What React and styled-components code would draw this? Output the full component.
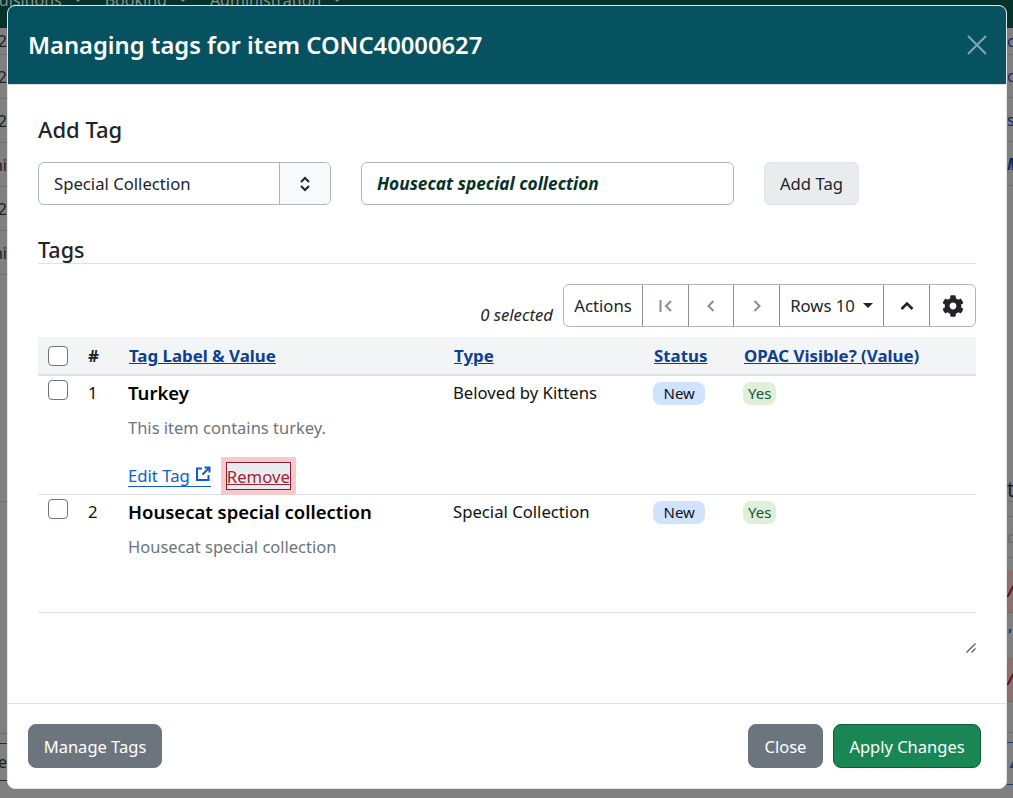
import React from 'react';
import styled, { createGlobalStyle } from 'styled-components';
import { FaCog } from 'react-icons/fa';

const GlobalStyle = createGlobalStyle`
  html, body { margin: 0; padding: 0; height: 100%; overflow: hidden; }
  body { font-family: "Noto Sans", "Open Sans", Arial, sans-serif; background: #808080; }
`;

const Page = styled.div`
  width: 1013px;
  height: 798px;
  position: relative;
  overflow: hidden;
  background: #808080;
`;

// page behind the modal, only the edges and the top of it show
const TopBar = styled.div`
  height: 28px;
  background: #07322a;
  color: #84938e;
  font-size: 16px;
  line-height: 0;
  display: flex;
  gap: 23px;
  overflow: hidden;
`;

const NavItem = styled.span`
  display: flex;
  align-items: center;
  gap: 12px;
  height: 0;
  margin-left: ${(p) => p.$ml || 0}px;
  white-space: nowrap;
`;

const NavCaret = styled.span`
  border-top: 4px solid #84938e;
  border-left: 4px solid transparent;
  border-right: 4px solid transparent;
`;

const Behind = styled.div`
  display: flex;
  justify-content: space-between;
`;

const Edge = styled.div`
  width: ${(p) => p.$w}px;
  overflow: hidden;
  display: flex;
  flex-direction: column;
`;

const EdgeRow = styled.div`
  height: ${(p) => p.$h}px;
  box-sizing: border-box;
  flex: none;
  display: flex;
  align-items: center;
  justify-content: ${(p) => (p.$end ? 'flex-end' : 'flex-start')};
  background: ${(p) => p.$bg || 'transparent'};
  border-bottom: 1px solid ${(p) => p.$line || '#6f6f6f'};
  color: ${(p) => p.$color || '#1c1f22'};
  font-size: ${(p) => p.$size || 16}px;
  font-style: ${(p) => (p.$italic ? 'italic' : 'normal')};
  font-weight: ${(p) => (p.$italic ? 700 : 400)};
  white-space: nowrap;
`;

const Modal = styled.div`
  position: absolute;
  left: 7px;
  top: 5px;
  width: 1000px;
  height: 784px;
  box-sizing: border-box;
  background: #fff;
  border: 1px solid #e4e4e4;
  border-radius: 8px;
  display: flex;
  flex-direction: column;
  overflow: hidden;
`;

const Header = styled.div`
  height: 79px;
  box-sizing: border-box;
  flex: none;
  background: #065260;
  border-bottom: 1px solid #dee2e6;
  display: flex;
  align-items: center;
  justify-content: space-between;
  padding: 0 19px 0 20px;
`;

const Title = styled.h1`
  margin: 0;
  font-size: 23.75px;
  font-weight: 600;
  color: #fff;
`;

const Body = styled.div`
  flex: 1;
  padding: 28px 30px 0;
  display: flex;
  flex-direction: column;
  color: #212529;
  font-size: 16.7px;
`;

const SectionTitle = styled.h2`
  margin: 0;
  font-size: 22px;
  font-weight: 500;
  line-height: 32px;
`;

const AddRow = styled.div`
  display: flex;
  margin-top: 17px;
  height: 43px;
`;

const Select = styled.div`
  width: 293px;
  box-sizing: border-box;
  display: flex;
  border: 1px solid #adb5bd;
  border-radius: 6px;
  margin-right: 30px;
  overflow: hidden;
`;

const SelectValue = styled.div`
  flex: 1;
  padding-left: 15px;
  display: flex;
  align-items: center;
`;

const SelectArrows = styled.div`
  width: 50px;
  background: #f8f9fa;
  border-left: 1px solid #adb5bd;
  display: flex;
  align-items: center;
  justify-content: center;
`;

const TagInput = styled.div`
  width: 373px;
  box-sizing: border-box;
  margin-right: 30px;
  border: 1px solid #adb5bd;
  border-radius: 6px;
  padding-left: 15px;
  display: flex;
  align-items: center;
  font-size: 17.3px;
  font-weight: 700;
  font-style: italic;
  color: #07322a;
`;

const GreyButton = styled.button`
  font: inherit;
  color: #212529;
  width: 95px;
  padding: 0;
  background: #e9ecef;
  border: 1px solid #dee2e6;
  border-radius: 6px;
`;

const TagsHeading = styled(SectionTitle)`
  margin-top: 31px;
  font-size: 21.5px;
  line-height: 27px;
  border-bottom: 1px solid #dee2e6;
`;

const Toolbar = styled.div`
  margin-top: 20px;
  display: flex;
  justify-content: flex-end;
  align-items: flex-end;
  gap: 10px;
`;

const Selected = styled.em`
  line-height: 24px;
`;

const ToolGroup = styled.div`
  display: flex;
  height: 43px;
  border: 1px solid #adb5bd;
  border-radius: 6px;
  box-sizing: border-box;
`;

const ToolButton = styled.div`
  width: ${(p) => p.$w}px;
  box-sizing: border-box;
  display: flex;
  align-items: center;
  justify-content: center;
  gap: 8px;
  color: #212529;
  & + & { border-left: 1px solid #8a8f94; }
`;

const Caret = styled.span`
  border-top: 5px solid #212529;
  border-left: 5px solid transparent;
  border-right: 5px solid transparent;
`;

const Table = styled.table`
  margin-top: 10px;
  width: 100%;
  border-collapse: collapse;
  table-layout: fixed;
`;

const Col = styled.col`
  width: ${(p) => (p.$w ? `${p.$w}px` : 'auto')};
`;

const HeadCell = styled.th`
  height: 37px;
  padding: 0;
  text-align: left;
  font-size: 16.85px;
  background: #f3f4f6;
  border-bottom: 2px solid #dee2e6;
  font-weight: 700;
  color: ${(p) => (p.$plain ? '#212529' : '#0b3f93')};
  text-decoration: ${(p) => (p.$plain ? 'none' : 'underline')};
`;

const Row = styled.tr`
  height: ${(p) => p.$h}px;
`;

const Cell = styled.td`
  padding: 5px 0 0;
  vertical-align: top;
  border-bottom: 1px solid #dee2e6;
  line-height: 24px;
  color: #111;
`;

const CheckCell = styled(Cell)`
  padding: 4px 0 0 10px;
`;

const Check = styled.span`
  display: block;
  box-sizing: border-box;
  width: 20px;
  height: 20px;
  border: 1px solid #6c757d;
  border-radius: 4px;
  background: #fff;
`;

const HeadCheck = styled(Check)`
  margin-left: 10px;
`;

const Label = styled.div`
  margin-left: -1px;
  font-size: 18.5px;
  font-weight: 600;
  color: #000;
`;

const Description = styled.div`
  margin: 11px 0 0 -1px;
  font-size: 16.5px;
  color: #6c757d;
`;

const TypeText = styled.div`
  margin-left: -1px;
`;

const Links = styled.div`
  display: flex;
  align-items: center;
  margin-top: 22px;
  height: 28px;
  gap: 15px;
  line-height: 20px;
`;

const EditLink = styled.span`
  color: #0b5ed7;
  border-bottom: 1px solid #0b5ed7;
  display: inline-flex;
  align-items: flex-start;
  gap: 5px;
  margin-left: -1px;
  margin-top: 1px;
`;

const RemoveLink = styled.span`
  box-sizing: border-box;
  height: 28px;
  line-height: 27px;
  width: 65px;
  text-align: center;
  color: #a02334;
  text-decoration: underline;
  background: #e9ecef;
  border: 1px solid #8c1c2c;
  box-shadow: 0 0 0 5px #f5c9cd;
`;

const Pill = styled.span`
  display: inline-block;
  margin: 1px 0 0 -1px;
  font-size: 15px;
  line-height: 23px;
  padding: 0 ${(p) => p.$pad}px;
  border-radius: 8px;
  color: ${(p) => p.$color};
  background: ${(p) => p.$bg};
`;

const ResizeArea = styled.div`
  flex: none;
  padding-top: 30px;
  display: flex;
  justify-content: flex-end;
`;

const Footer = styled.div`
  height: 85px;
  flex: none;
  border-top: 1px solid #dee2e6;
  padding: 20px 25px 0 20px;
  box-sizing: border-box;
  display: flex;
  gap: 10px;
`;

const FooterButton = styled.button`
  font: inherit;
  font-size: 16.5px;
  width: ${(p) => p.$w}px;
  height: 44px;
  padding: 0;
  color: #fff;
  background: ${(p) => p.$bg};
  border: 1px solid ${(p) => p.$border || p.$bg};
  border-radius: 8px;
  ${(p) => p.$push && 'margin-right: auto;'}
`;

const leftEdge = [
  { h: 27, t: '2' },
  { h: 44, t: '2' },
  { h: 44, t: '2' },
  { h: 44, t: 'ni' },
  { h: 44, t: '2' },
  { h: 44, t: 'ni' },
  { h: 227 },
  { h: 232, line: '#6a6a6a' },
  { h: 10, line: '#2a2d30' },
  { h: 37, t: 'e', line: '#2a2d30' },
];

const rightEdge = [
  { h: 27, t: 'o', color: '#0b2a66' },
  { h: 43, t: 'c', color: '#0b2a66' },
  { h: 44, t: 'st', color: '#0b2a66' },
  { h: 44, t: 'M', color: '#0b2a66', italic: true },
  { h: 291, line: 'transparent' },
  { h: 25, t: 't', size: 21 },
  { h: 15 },
  { h: 41, t: 'ca', color: '#6a6a6a' },
  { h: 12, line: 'transparent' },
  { h: 43, t: '/', color: '#5a0f1a', bg: '#8c7070', italic: true, line: '#7a6565' },
  { h: 44, t: "'", color: '#0b3f80', italic: true, line: 'transparent' },
  { h: 45, t: '/', color: '#5a0f1a', bg: '#8c7070', italic: true, line: '#7a6565' },
  { h: 31 },
  { h: 10, line: '#1f3f6e' },
  { h: 42, t: '▲', color: '#1f3f6e', size: 12, line: '#1f3f6e' },
];

const rows = [
  { n: 1, label: 'Turkey', text: 'This item contains turkey.', type: 'Beloved by Kittens', links: true, h: 119 },
  { n: 2, label: 'Housecat special collection', text: 'Housecat special collection', type: 'Special Collection', h: 118 },
];

const Arrow = ({ d, color = '#868e96', weight = 2 }) => (
  <svg width="16" height="16" viewBox="0 0 16 16" fill="none" stroke={color} strokeWidth={weight}>
    <path d={d} />
  </svg>
);

export default function App() {
  return (
    <Page>
      <GlobalStyle />
      <TopBar>
        <NavItem $ml={-29}>Acquisitions <NavCaret /></NavItem>
        <NavItem>Booking <NavCaret /></NavItem>
        <NavItem>Administration <NavCaret /></NavItem>
      </TopBar>
      <Behind>
        <Edge $w={7}>
          {leftEdge.map((r, i) => (
            <EdgeRow key={i} $h={r.h} $line={r.line} $end>{r.t}</EdgeRow>
          ))}
        </Edge>
        <Edge $w={6}>
          {rightEdge.map((r, i) => (
            <EdgeRow key={i} $h={r.h} $line={r.line} $color={r.color} $bg={r.bg} $size={r.size} $italic={r.italic}>
              {r.t}
            </EdgeRow>
          ))}
        </Edge>
      </Behind>
      <Modal>
        <Header>
          <Title>Managing tags for item CONC40000627</Title>
          <svg width="20" height="20" viewBox="0 0 20 20" stroke="#7fa8af" strokeWidth="2">
            <path d="M1 1l18 18M19 1L1 19" />
          </svg>
        </Header>
        <Body>
          <SectionTitle>Add Tag</SectionTitle>
          <AddRow>
            <Select>
              <SelectValue>Special Collection</SelectValue>
              <SelectArrows>
                <svg width="12" height="18" viewBox="0 0 12 18" fill="none" stroke="#212529" strokeWidth="2">
                  <path d="M2 7l4-4 4 4M2 11l4 4 4-4" />
                </svg>
              </SelectArrows>
            </Select>
            <TagInput>Housecat special collection</TagInput>
            <GreyButton>Add Tag</GreyButton>
          </AddRow>
          <TagsHeading>Tags</TagsHeading>
          <Toolbar>
            <Selected>0 selected</Selected>
            <ToolGroup>
              <ToolButton $w={78}>Actions</ToolButton>
              <ToolButton $w={46}><Arrow d="M2.5 2v12M13 3L8 8l5 5" /></ToolButton>
              <ToolButton $w={45}><Arrow d="M10.5 3L5.5 8l5 5" /></ToolButton>
              <ToolButton $w={46}><Arrow d="M5.5 3l5 5-5 5" /></ToolButton>
              <ToolButton $w={104}>Rows 10 <Caret /></ToolButton>
              <ToolButton $w={46}><Arrow d="M2.5 11l5.5-5.5 5.5 5.5" color="#212529" weight={2.6} /></ToolButton>
              <ToolButton $w={46}><FaCog size={22} color="#212529" /></ToolButton>
            </ToolGroup>
          </Toolbar>
          <Table>
            <colgroup>
              <Col $w={50} />
              <Col $w={41} />
              <Col $w={325} />
              <Col $w={200} />
              <Col $w={90} />
              <Col />
            </colgroup>
            <thead>
              <tr>
                <HeadCell $plain><HeadCheck /></HeadCell>
                <HeadCell $plain>#</HeadCell>
                <HeadCell>Tag Label &amp; Value</HeadCell>
                <HeadCell>Type</HeadCell>
                <HeadCell>Status</HeadCell>
                <HeadCell>OPAC Visible? (Value)</HeadCell>
              </tr>
            </thead>
            <tbody>
              {rows.map((r) => (
                <Row key={r.n} $h={r.h}>
                  <CheckCell><Check /></CheckCell>
                  <Cell>{r.n}</Cell>
                  <Cell>
                    <Label>{r.label}</Label>
                    <Description>{r.text}</Description>
                    {r.links && (
                      <Links>
                        <EditLink>
                          Edit Tag
                          <svg width="16" height="16" viewBox="0 0 16 16" fill="none" stroke="#0b5ed7" strokeWidth="2">
                            <path d="M7 2.5H2V14h11.5V9M9.5 1.5h5v5M14 2L7.5 8.5" />
                          </svg>
                        </EditLink>
                        <RemoveLink>Remove</RemoveLink>
                      </Links>
                    )}
                  </Cell>
                  <Cell><TypeText>{r.type}</TypeText></Cell>
                  <Cell><Pill $pad={10.5} $bg="#cfe2ff" $color="#111">New</Pill></Cell>
                  <Cell><Pill $pad={5} $bg="#dff0d8" $color="#1d4f3a">Yes</Pill></Cell>
                </Row>
              ))}
            </tbody>
          </Table>
          <ResizeArea>
            <svg width="10" height="10" viewBox="0 0 10 10" stroke="#555" strokeWidth="1.2">
              <path d="M0.5 9.5L9.5 0.5M5.5 9.5L9.5 5.5" />
            </svg>
          </ResizeArea>
        </Body>
        <Footer>
          <FooterButton $w={134} $bg="#6c757d" $push>Manage Tags</FooterButton>
          <FooterButton $w={75} $bg="#6c757d">Close</FooterButton>
          <FooterButton $w={148} $bg="#198754" $border="#0f5c3a">Apply Changes</FooterButton>
        </Footer>
      </Modal>
    </Page>
  );
}
